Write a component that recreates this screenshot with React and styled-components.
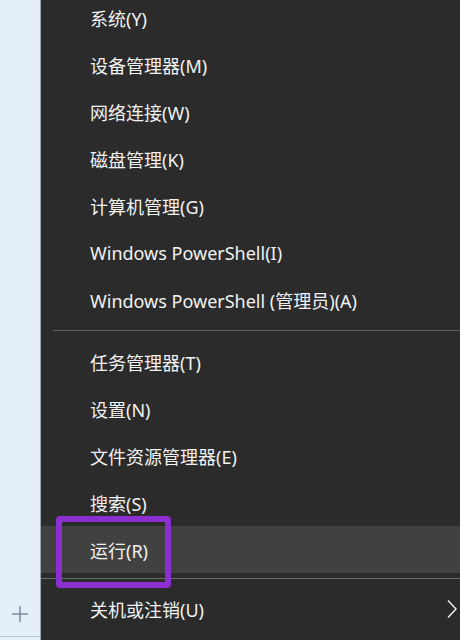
import React from "react";
import styled, { createGlobalStyle } from "styled-components";

const Global = createGlobalStyle`
  html, body { margin: 0; padding: 0; background: #2b2b2b; overflow: hidden; }
  #root { width: 460px; height: 640px; }
`;

const Screen = styled.div`
  display: flex;
  width: 460px;
  height: 640px;
  overflow: hidden;
  font-family: "Noto Sans", "Noto Sans CJK SC", sans-serif;
`;

const Strip = styled.div`
  width: 40px;
  flex: none;
  background: #e3eef9;
  border-right: 1px solid #9aa6b2;
  display: flex;
  flex-direction: column;
  justify-content: flex-end;
  align-items: center;
`;

const StripFoot = styled.div`
  width: 100%;
  height: 36px;
  display: flex;
  align-items: flex-start;
  justify-content: center;
  border-bottom: 1px solid #b9c6d3;
  padding-top: 4px;
  box-sizing: border-box;
  margin-bottom: 3px;
`;

const Menu = styled.div`
  flex: 1;
  background: #2b2b2b;
  display: flex;
  flex-direction: column;
  margin-top: -6px;
`;

const Row = styled.div`
  position: relative;
  height: 47px;
  flex: none;
  display: flex;
  align-items: center;
  justify-content: space-between;
  padding: 0 3px 0 49px;
  background: ${(p) => (p.$active ? "#414141" : "transparent")};
  color: #f2f2f2;
  font-size: 18px;
  white-space: nowrap;
`;

const Separator = styled.div`
  height: 1px;
  flex: none;
  background: ${(p) => p.$color || "#5e5e5e"};
  margin: ${(p) => p.$margin};
`;

const Marker = styled.div`
  position: absolute;
  left: 15px;
  top: -10px;
  width: 115px;
  height: 72px;
  box-sizing: border-box;
  border: 6px solid #8b2fd0;
  border-radius: 4px;
`;

const groupA = [
  "系统(Y)",
  "设备管理器(M)",
  "网络连接(W)",
  "磁盘管理(K)",
  "计算机管理(G)",
  "Windows PowerShell(I)",
  "Windows PowerShell (管理员)(A)",
];

const groupB = ["任务管理器(T)", "设置(N)", "文件资源管理器(E)", "搜索(S)"];

export default function App() {
  return (
    <>
      <Global />
      <Screen>
        <Strip>
          <StripFoot>
            <svg width="18" height="18" viewBox="0 0 18 18">
              <path d="M9 1v16M1 9h16" stroke="#7d8b99" strokeWidth="1.5" fill="none" />
            </svg>
          </StripFoot>
        </Strip>
        <Menu>
          {groupA.map((t) => (
            <Row key={t}>{t}</Row>
          ))}
          <Separator $margin="7px 0 7px 12px" />
          {groupB.map((t) => (
            <Row key={t}>{t}</Row>
          ))}
          <Row $active>
            运行(R)
            <Marker />
          </Row>
          <Separator $color="#6e6e6e" $margin="5px 0 6px 0" />
          <Row>
            关机或注销(U)
            <svg width="10" height="20" viewBox="0 0 10 20">
              <path d="M1 1.5L9 10L1 18.5" stroke="#f2f2f2" strokeWidth="1.4" fill="none" />
            </svg>
          </Row>
        </Menu>
      </Screen>
    </>
  );
}
